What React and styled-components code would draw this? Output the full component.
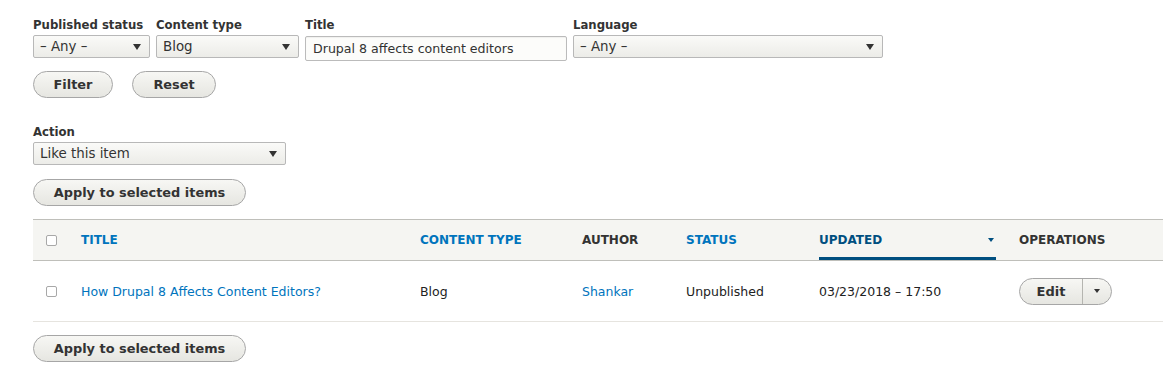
import React from "react";
import styled, { createGlobalStyle } from "styled-components";

const Global = createGlobalStyle`
  html, body { margin: 0; padding: 0; background: #fff; }
  body { font-family: "DejaVu Sans", Verdana, sans-serif; color: #222; }
`;

const Page = styled.div`
  padding: 16px 0 0 33px;
  width: 1130px;
  overflow: hidden;
`;

const FilterRow = styled.div`
  display: flex;
  gap: 6px;
  align-items: flex-start;
`;

const Field = styled.div`
  display: flex;
  flex-direction: column;
`;

const Label = styled.label`
  font-size: 11.7px;
  font-weight: bold;
  color: #333;
  line-height: 18px;
  margin-bottom: 1px;
`;

const Select = styled.div`
  box-sizing: border-box;
  width: ${(p) => p.w}px;
  height: 23px;
  border: 1px solid #b8b8b8;
  border-radius: 2px;
  background: linear-gradient(#fafaf8, #ecece8);
  display: flex;
  align-items: center;
  justify-content: space-between;
  padding: 0 8px 0 6px;
  font-size: 13.4px;
  color: #333;
`;

const Arrow = styled.span`
  width: 0;
  height: 0;
  border-left: 4.5px solid transparent;
  border-right: 4.5px solid transparent;
  border-top: 6px solid #333;
`;

const Input = styled.div`
  box-sizing: border-box;
  width: ${(p) => p.w}px;
  height: 25px;
  margin-top: 1px;
  border: 1px solid #bbb;
  border-radius: 2px;
  background: #fcfcfa;
  display: flex;
  align-items: center;
  padding: 0 7px;
  font-size: 12.6px;
  color: #333;
  box-shadow: inset 0 1px 1px rgba(0,0,0,0.05);
`;

const ButtonRow = styled.div`
  display: flex;
  gap: 19px;
  margin-top: ${(p) => p.mt}px;
`;

const Button = styled.button`
  box-sizing: border-box;
  width: ${(p) => p.w}px;
  height: 27px;
  border: 1px solid #a6a6a6;
  border-radius: 20em;
  background: linear-gradient(#f7f7f4, #e6e6e1);
  font-family: inherit;
  font-weight: bold;
  font-size: 12.9px;
  color: #333;
  padding: 0;
  display: flex;
  align-items: center;
  justify-content: center;
`;

const ActionBlock = styled.div`
  margin-top: 25px;
  display: flex;
  flex-direction: column;
`;

const Table = styled.table`
  margin-top: 13px;
  width: 1130px;
  border-collapse: collapse;
  font-size: 12.5px;
`;

const HeadRow = styled.tr`
  background: #f5f5f2;
  border-top: 1px solid #bfbfba;
  border-bottom: 1px solid #bfbfba;
`;

const Th = styled.th`
  height: 40px;
  padding: 0;
  text-align: left;
  font-weight: bold;
  font-size: 12px;
  text-transform: uppercase;
  color: ${(p) => (p.link ? (p.active ? "#004f80" : "#0074bd") : "#333")};
  width: ${(p) => p.w}px;
  vertical-align: middle;
`;

const ActiveSort = styled.div`
  display: flex;
  align-items: center;
  justify-content: space-between;
  height: 40px;
  margin-right: 23px;
  border-bottom: 3px solid #004f80;
  box-sizing: border-box;
  padding-top: 3px;
`;

const SortArrow = styled.span`
  width: 0;
  height: 0;
  border-left: 3.5px solid transparent;
  border-right: 3.5px solid transparent;
  border-top: 4.5px solid #004f80;
  margin-right: 2px;
`;

const Row = styled.tr`
  border-bottom: 1px solid #e6e4df;
`;

const Td = styled.td`
  height: 60px;
  padding: 0;
  color: ${(p) => (p.link ? "#0074bd" : "#222")};
  vertical-align: middle;
`;

const Check = styled.span`
  display: block;
  box-sizing: border-box;
  width: 11px;
  height: 11px;
  margin-left: 13px;
  border: 1px solid #a8a8a8;
  border-radius: 2px;
  background: #fff;
`;

const DropButton = styled.div`
  box-sizing: border-box;
  display: flex;
  width: 93px;
  height: 27px;
  border: 1px solid #a6a6a6;
  border-radius: 20em;
  background: linear-gradient(#f7f7f4, #e6e6e1);
  overflow: hidden;
`;

const DropMain = styled.span`
  flex: 1;
  display: flex;
  align-items: center;
  justify-content: center;
  font-weight: bold;
  font-size: 13px;
  color: #333;
  border-right: 1px solid #b5b5b0;
`;

const DropToggle = styled.span`
  width: 28px;
  display: flex;
  align-items: center;
  justify-content: center;
`;

const SmallArrow = styled.span`
  width: 0;
  height: 0;
  border-left: 3.5px solid transparent;
  border-right: 3.5px solid transparent;
  border-top: 4.5px solid #333;
`;

const FirstCell = styled.td`
  width: 48px;
  padding: 0;
  vertical-align: middle;
`;

const FirstTh = styled.th`
  width: 48px;
  padding: 0;
`;

export default function App() {
  return (
    <>
      <Global />
      <Page>
        <FilterRow>
          <Field>
            <Label>Published status</Label>
            <Select w={117}>
              <span>– Any –</span>
              <Arrow />
            </Select>
          </Field>
          <Field>
            <Label>Content type</Label>
            <Select w={143}>
              <span>Blog</span>
              <Arrow />
            </Select>
          </Field>
          <Field>
            <Label>Title</Label>
            <Input w={262}>Drupal 8 affects content editors</Input>
          </Field>
          <Field>
            <Label>Language</Label>
            <Select w={310}>
              <span>– Any –</span>
              <Arrow />
            </Select>
          </Field>
        </FilterRow>
        <ButtonRow mt={10}>
          <Button w={80}>Filter</Button>
          <Button w={84}>Reset</Button>
        </ButtonRow>
        <ActionBlock>
          <Label>Action</Label>
          <Select w={253}>
            <span>Like this item</span>
            <Arrow />
          </Select>
        </ActionBlock>
        <ButtonRow mt={14}>
          <Button w={213}>Apply to selected items</Button>
        </ButtonRow>
        <Table>
          <thead>
            <HeadRow>
              <FirstTh>
                <Check />
              </FirstTh>
              <Th link w={339}>Title</Th>
              <Th link w={162}>Content type</Th>
              <Th w={104}>Author</Th>
              <Th link w={133}>Status</Th>
              <Th link active w={200}>
                <ActiveSort>
                  <span>Updated</span>
                  <SortArrow />
                </ActiveSort>
              </Th>
              <Th>Operations</Th>
            </HeadRow>
          </thead>
          <tbody>
            <Row>
              <FirstCell>
                <Check />
              </FirstCell>
              <Td link>How Drupal 8 Affects Content Editors?</Td>
              <Td>Blog</Td>
              <Td link>Shankar</Td>
              <Td>Unpublished</Td>
              <Td>03/23/2018 – 17:50</Td>
              <Td>
                <DropButton>
                  <DropMain>Edit</DropMain>
                  <DropToggle>
                    <SmallArrow />
                  </DropToggle>
                </DropButton>
              </Td>
            </Row>
          </tbody>
        </Table>
        <ButtonRow mt={13}>
          <Button w={213}>Apply to selected items</Button>
        </ButtonRow>
      </Page>
    </>
  );
}
